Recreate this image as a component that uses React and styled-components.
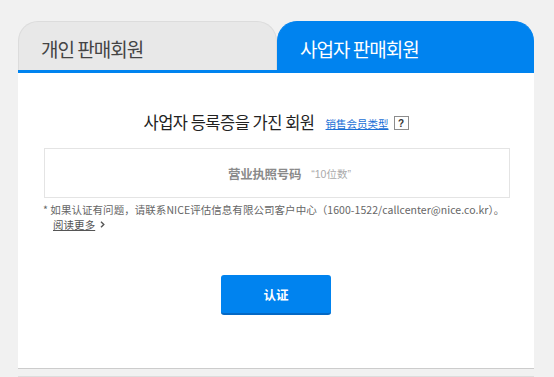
import React, { useState } from 'react';
import styled, { createGlobalStyle } from 'styled-components';

const GlobalStyle = createGlobalStyle`
  body {
    margin: 0;
    background: #f1f1f1;
    font-family: "Noto Sans CJK KR", "Noto Sans CJK SC", "Noto Sans", sans-serif;
  }
`;

const Page = styled.div`
  width: 516px;
  padding: 21px 0 0 18px;
`;

const TabBar = styled.div`
  display: flex;
  border-bottom: 3px solid #0083ef;
`;

const Tab = styled.button`
  flex: ${p => (p.$active ? '0 0 257px' : '0 0 259px')};
  height: 49px;
  border: 1px solid ${p => (p.$active ? '#0083ef' : '#dcdcdc')};
  border-bottom: none;
  border-radius: 20px 20px 0 0;
  background: ${p => (p.$active ? '#0083ef' : '#e8e8e8')};
  color: ${p => (p.$active ? '#ffffff' : '#444444')};
  font-family: "Noto Sans CJK KR", sans-serif;
  font-size: 19px;
  letter-spacing: -1px;
  text-align: left;
  padding: 4px 0 0 22px;
  cursor: pointer;
`;

const Card = styled.div`
  background: #ffffff;
  height: 295px;
  border-bottom: 1px solid #cccccc;
  display: flex;
  flex-direction: column;
`;

const TitleRow = styled.div`
  display: flex;
  align-items: center;
  justify-content: center;
  gap: 5px;
  margin-top: 36px;
  height: 26px;
`;

const Title = styled.h2`
  margin: 0 6px 0 0;
  font-size: 16.5px;
  font-weight: normal;
  letter-spacing: -0.5px;
  color: #222222;
  font-family: "Noto Sans CJK KR", sans-serif;
`;

const TypeLink = styled.a`
  font-family: "Noto Sans CJK SC", sans-serif;
  font-size: 10.5px;
  color: #1b6fd6;
  text-decoration: underline;
  margin-top: 2px;
`;

const HelpBox = styled.span`
  width: 13px;
  height: 12px;
  border: 1px solid #8c8c8c;
  display: inline-flex;
  align-items: center;
  justify-content: center;
  font-family: "Liberation Sans", sans-serif;
  font-size: 10px;
  font-weight: bold;
  color: #333333;
  margin-top: 2px;
`;

const InputBox = styled.div`
  margin: 13px 24px 0 26px;
  height: 48px;
  border: 1px solid #e4e4e4;
  display: flex;
  align-items: center;
  gap: 10px;
  padding-left: 183px;
`;

const Placeholder = styled.span`
  font-family: "Noto Sans CJK SC", sans-serif;
  font-size: 12.5px;
  font-weight: bold;
  letter-spacing: -0.3px;
  color: #8a8a8a;
`;

const Hint = styled.span`
  font-family: "Liberation Sans", "Noto Sans CJK SC", sans-serif;
  font-size: 10.5px;
  color: #aaaaaa;
`;

const Note = styled.div`
  margin: 4px 0 0 25px;
  font-family: "Noto Sans CJK SC", sans-serif;
  font-size: 10.5px;
  line-height: 15px;
  letter-spacing: 0.05px;
  color: #666666;
`;

const MoreRow = styled.div`
  display: flex;
  align-items: center;
  gap: 5px;
  margin-left: 10px;
`;

const More = styled.a`
  color: #555555;
  text-decoration: underline;
`;

const Arrow = styled.svg`
  width: 5px;
  height: 7px;
`;

const ButtonRow = styled.div`
  display: flex;
  justify-content: center;
  margin-top: 43px;
`;

const SubmitButton = styled.button`
  width: 110px;
  height: 40px;
  border: none;
  border-bottom: 2px solid #0468c4;
  border-radius: 3px;
  background: #0083ef;
  color: #ffffff;
  font-family: "Noto Sans CJK SC", sans-serif;
  font-size: 12.5px;
  font-weight: bold;
  cursor: pointer;
`;

const Footer = styled.div`
  margin-top: 7px;
  height: 10px;
  border-top: 1px solid #dddddd;
`;

function App() {
  const [active, setActive] = useState(1);

  return (
    <Page>
      <GlobalStyle />
      <TabBar>
        <Tab $active={active === 0} onClick={() => setActive(0)}>개인 판매회원</Tab>
        <Tab $active={active === 1} onClick={() => setActive(1)}>사업자 판매회원</Tab>
      </TabBar>
      <Card>
        <TitleRow>
          <Title>사업자 등록증을 가진 회원</Title>
          <TypeLink href="#">销售会员类型</TypeLink>
          <HelpBox>?</HelpBox>
        </TitleRow>
        <InputBox>
          <Placeholder>营业执照号码</Placeholder>
          <Hint>“10位数”</Hint>
        </InputBox>
        <Note>
          <div>* 如果认证有问题，请联系NICE评估信息有限公司客户中心（1600-1522/callcenter@nice.co.kr）。</div>
          <MoreRow>
            <More href="#">阅读更多</More>
            <Arrow viewBox="0 0 5 7">
              <path d="M1 0.8 L3.8 3.5 L1 6.2" fill="none" stroke="#555" strokeWidth="1.4" />
            </Arrow>
          </MoreRow>
        </Note>
        <ButtonRow>
          <SubmitButton>认证</SubmitButton>
        </ButtonRow>
      </Card>
      <Footer />
    </Page>
  );
}

export default App;
